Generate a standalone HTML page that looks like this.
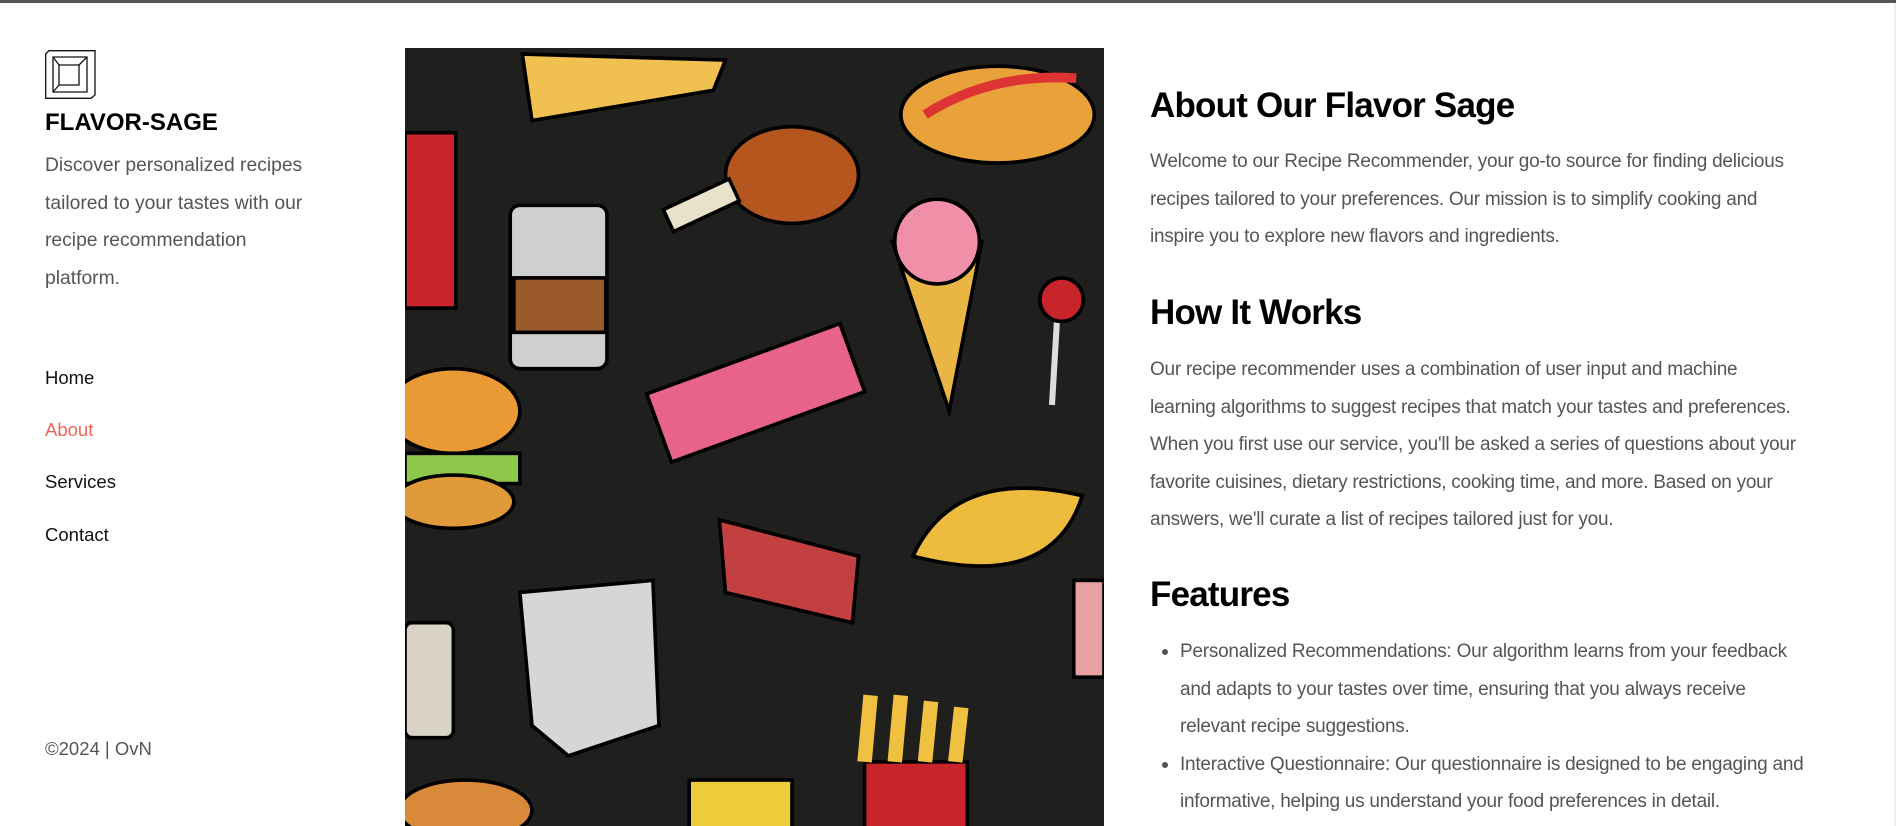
<!DOCTYPE html>
<html><head><meta charset="utf-8"><style>
*{margin:0;padding:0;box-sizing:border-box}
body{width:1896px;height:826px;overflow:hidden;background:#fff;font-family:"Liberation Sans",sans-serif;position:relative}
.top{position:absolute;left:0;top:0;width:1896px;height:3px;background:#555}
.sb{position:absolute;right:0;top:3px;width:2px;height:823px;background:#eee}
.a{position:absolute;white-space:nowrap}
.desc{left:45px;top:147px;font-size:19.3px;line-height:37.5px;color:#555}
.nav{left:45px;font-size:18.5px;color:#111}
h1,h2{position:absolute;left:1150px;font-weight:bold;color:#000;font-size:35px;letter-spacing:-0.8px;white-space:nowrap}
.p{left:1150px;font-size:19px;line-height:37.5px;color:#555;letter-spacing:-0.25px}
ul{position:absolute;left:1180px;top:633px;font-size:19px;line-height:37.5px;color:#555;letter-spacing:-0.25px;white-space:nowrap;list-style:none}
li{position:relative}
li:before{content:"";position:absolute;left-18px;left:-18px;top:16px;width:6px;height:6px;border-radius:50%;background:#555}
</style></head><body>
<div class="top"></div><div class="sb"></div>
<svg class="a" style="left:45px;top:50px" width="51" height="49" viewBox="0 0 51 49" fill="none" stroke="#111" stroke-width="1.3">
<path d="M0.7 4 L4 0.7 H50 V45 L46 48.3 H0.7 Z"/><path d="M8 7 H42 V42 H8 Z"/><path d="M14 15 H34 V35 H14 Z"/><path d="M8 7 L14 15 M42 7 L34 15 M8 42 L14 35"/>
</svg>
<div class="a" style="left:45px;top:109px;font-size:24px;font-weight:bold;color:#000">FLAVOR-SAGE</div>
<div class="a desc">Discover personalized recipes<br>tailored to your tastes with our<br>recipe recommendation<br>platform.</div>
<div class="a nav" style="top:367px">Home</div>
<div class="a nav" style="top:419px;color:#f2665a">About</div>
<div class="a nav" style="top:471px">Services</div>
<div class="a nav" style="top:524px">Contact</div>
<div class="a" style="left:45px;top:738px;font-size:18.5px;color:#555">©2024 | OvN</div>

<svg class="a" style="left:405px;top:48px" width="699" height="778" viewBox="335 40 578 643" preserveAspectRatio="none">
<rect x="335" y="40" width="578" height="643" fill="#1f1f1d"/>
<g stroke="#000" stroke-width="3">
<path d="M432 45 L600 50 L590 75 L440 100 Z" fill="#f0c050"/>
<ellipse cx="825" cy="95" rx="80" ry="40" fill="#e9a13a"/><path d="M765 95 Q820 60 890 65" stroke="#d33" stroke-width="8" fill="none"/>
<ellipse cx="655" cy="145" rx="55" ry="40" fill="#b5561f"/><rect x="550" y="160" width="60" height="20" fill="#e8e2c8" transform="rotate(-25 580 170)"/>
<rect x="335" y="110" width="42" height="145" fill="#c8242c"/>
<rect x="422" y="170" width="80" height="135" rx="8" fill="#cfcfcf"/><rect x="425" y="230" width="76" height="45" fill="#9a5a2c"/>
<path d="M738 200 L812 200 L785 340 Z" fill="#e9b545"/><circle cx="775" cy="200" r="35" fill="#ef8fa8"/>
<line x1="875" y1="250" x2="870" y2="335" stroke="#ddd" stroke-width="5"/><circle cx="878" cy="248" r="18" fill="#c8242c"/>
<rect x="540" y="295" width="170" height="60" fill="#e8638a" transform="rotate(-20 625 325)"/>
<ellipse cx="375" cy="340" rx="55" ry="35" fill="#e99a35"/><rect x="335" y="375" width="95" height="25" fill="#8ec84a"/><ellipse cx="375" cy="415" rx="50" ry="22" fill="#e09a3a"/>
<path d="M755 460 Q790 385 895 410 Q870 490 755 460 Z" fill="#edbb3d"/>
<path d="M595 430 L710 460 L705 515 L600 490 Z" fill="#c24040"/>
<path d="M430 490 L540 480 L545 600 L470 625 L440 600 Z" fill="#d6d6d6"/>
<rect x="335" y="515" width="40" height="95" rx="6" fill="#d8d3c5"/>
<rect x="715" y="630" width="85" height="55" fill="#c8242c"/><path d="M715 630 L720 575 M740 630 L745 575 M765 630 L770 580 M790 630 L795 585" stroke="#f0c040" stroke-width="12"/>
<ellipse cx="385" cy="670" rx="55" ry="25" fill="#d9893a"/>
<rect x="570" y="645" width="85" height="40" fill="#eecb3a"/>
<rect x="888" y="480" width="25" height="80" fill="#e8a0a0"/>
</g></svg>

<h1 style="top:86px">About Our Flavor Sage</h1>
<div class="a p" style="top:143px">Welcome to our Recipe Recommender, your go-to source for finding delicious<br>recipes tailored to your preferences. Our mission is to simplify cooking and<br>inspire you to explore new flavors and ingredients.</div>
<h2 style="top:293px">How It Works</h2>
<div class="a p" style="top:351px">Our recipe recommender uses a combination of user input and machine<br>learning algorithms to suggest recipes that match your tastes and preferences.<br>When you first use our service, you'll be asked a series of questions about your<br>favorite cuisines, dietary restrictions, cooking time, and more. Based on your<br>answers, we'll curate a list of recipes tailored just for you.</div>
<h2 style="top:575px">Features</h2>
<ul>
<li>Personalized Recommendations: Our algorithm learns from your feedback<br>and adapts to your tastes over time, ensuring that you always receive<br>relevant recipe suggestions.</li>
<li>Interactive Questionnaire: Our questionnaire is designed to be engaging and<br>informative, helping us understand your food preferences in detail.</li>
</ul>
</body></html>
